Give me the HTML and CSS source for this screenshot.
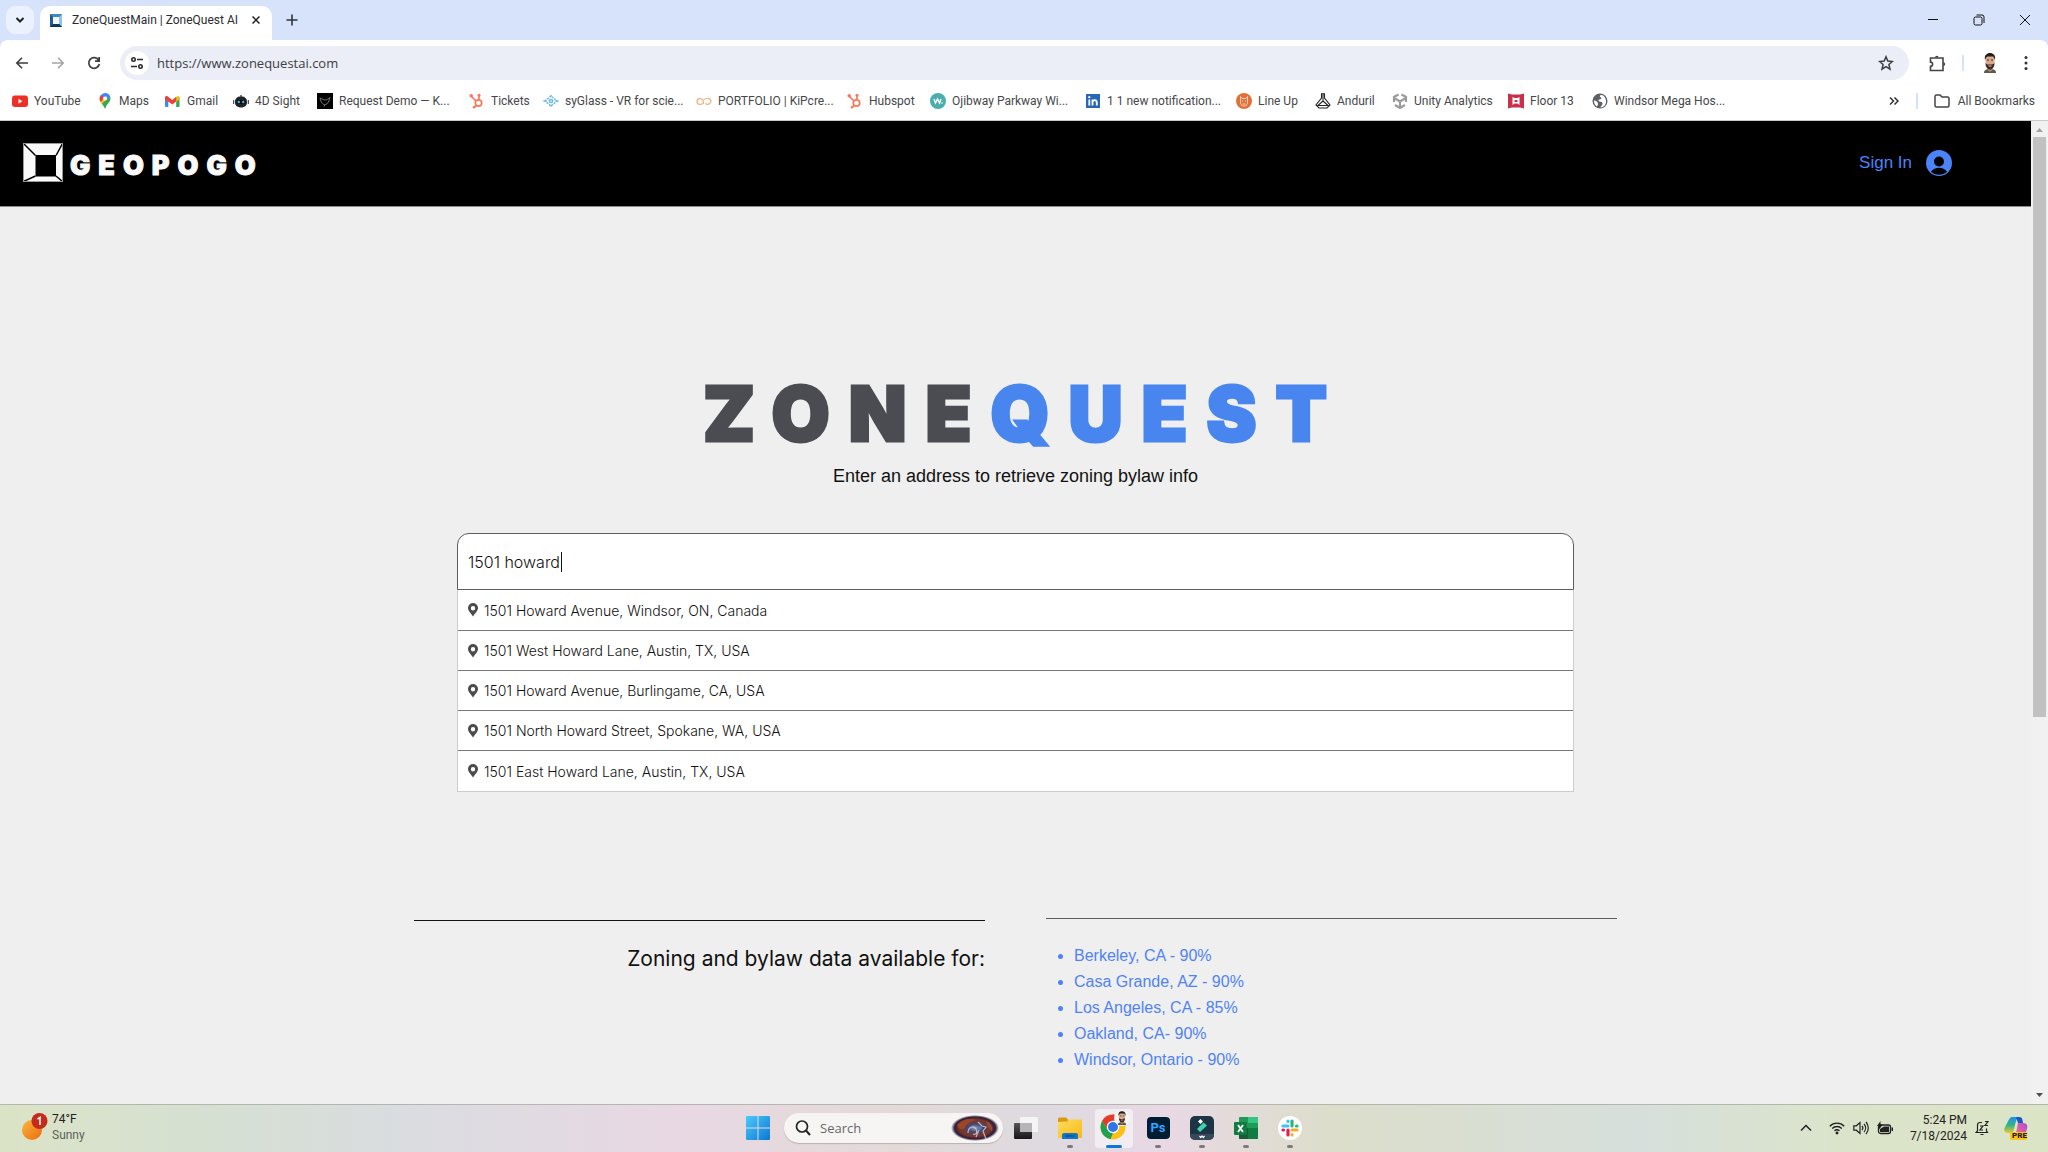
FILE: index.html
```html
<!DOCTYPE html>
<html lang="en">
<head>
<meta charset="utf-8">
<title>ZoneQuestMain | ZoneQuest AI</title>
<link rel="stylesheet" href="styles.css">
</head>
<body>
<svg width="0" height="0" class="defs" aria-hidden="true">
  <defs>
    <symbol id="pin" viewBox="0 0 10 14"><path fill="#4a4b4c" fill-rule="evenodd" d="M5 0a5 5 0 0 1 5 5c0 3-2.800 5-5 8.500C2.800 10 0 8 0 5a5 5 0 0 1 5-5zm0 3a2.200 2.200 0 1 0 0 4.400A2.200 2.200 0 0 0 5 3z"/></symbol>
    <symbol id="hubspot" viewBox="0 0 16 16"><g fill="none" stroke="#f8795a" stroke-width="1.700"><circle cx="9.500" cy="10" r="3.200"/><path d="M10 6.500V2M7 8L2.500 3.500M7.200 12.300L5 14.500"/></g><g fill="#f8795a"><circle cx="10" cy="2.200" r="1.500"/><circle cx="2.200" cy="2.800" r="1.800"/><circle cx="5" cy="14.300" r="1.300"/></g></symbol>
    <symbol id="face" viewBox="0 0 16 20"><path fill="#5d5852" d="M2 20c0-3 2-4 6-4s6 1 6 4z"/><path fill="#b98266" d="M5.500 12h5v5l-2.500 2-2.500-2z"/><path fill="#d8a88c" d="M3.500 5c0-5 9-5 9 0v5c0 3-2 6-4.500 6S3.500 13 3.500 10z"/><path fill="#231d1b" d="M3 7c-1-5 2-7 5-7s6 2 5 7c-1-2-1-3-2-3.500H5.500C4 4 4 5 3 7z"/><path fill="#3a2b26" d="M3.500 10c1 1.500 2 1.700 4.500 1.500s3.500 0 4.500-1.500c0 4-2 6.500-4.500 6.500S3.500 14 3.500 10z"/><path stroke="#3b2a24" d="M5 7h2M9 7h2"/><path stroke="#e9c9b8" d="M6.500 13h3"/></symbol>
    <linearGradient id="blue" x1="0" y1="0" x2="1" y2="1"><stop offset="0" stop-color="#4cc9fb"/><stop offset="1" stop-color="#0a78d4"/></linearGradient>
    <linearGradient id="sun" x1="0" y1="0" x2="1" y2="1"><stop offset="0" stop-color="#f6b73c"/><stop offset="1" stop-color="#f06a10"/></linearGradient>
    <linearGradient id="dark" x1="0" y1="0" x2="0" y2="1"><stop offset="0" stop-color="#555"/><stop offset="1" stop-color="#161616"/></linearGradient>
    <linearGradient id="folder" x1="0" y1="0" x2="1" y2="1"><stop offset="0" stop-color="#ffdc5e"/><stop offset="1" stop-color="#f9b916"/></linearGradient>
    <radialGradient id="nebula"><stop offset="0" stop-color="#8fa3c8"/><stop offset="0.300" stop-color="#4b4568"/><stop offset="0.650" stop-color="#7c3523"/><stop offset="0.850" stop-color="#2c1c3c"/><stop offset="1" stop-color="#2c1c3c" stop-opacity="0"/></radialGradient>
    <linearGradient id="cop1" x1="0" y1="0" x2="0" y2="1"><stop offset="0" stop-color="#1e8fe8"/><stop offset="0.500" stop-color="#2fb48a"/><stop offset="1" stop-color="#f1c52c"/></linearGradient>
    <linearGradient id="cop2" x1="1" y1="0" x2="0" y2="1"><stop offset="0" stop-color="#a44ae0"/><stop offset="0.500" stop-color="#e35fa2"/><stop offset="1" stop-color="#f78b3c"/></linearGradient>
  </defs>
</svg>

<header class="browser">
  <div class="tabstrip">
    <button class="tabsearch" aria-label="Search tabs"><svg width="10" height="10" viewBox="0 0 10 10"><path d="M1.500 3l3.500 3.500L8.500 3" fill="none" stroke="#222" stroke-width="2"/></svg></button>
    <div class="tab">
      <svg width="12" height="13" viewBox="0 0 12 13"><rect width="12" height="13" fill="#1d5c8f"/><path d="M0 0h12l-3 3H3z" fill="#3f8cc4"/><path d="M12 0v13l-3-3V3z" fill="#8ec4ea"/><path d="M0 13h12l-3-3H3z" fill="#123754"/><rect x="3" y="3" width="6" height="7" fill="#f3f7fb"/></svg>
      <span class="tab-title">ZoneQuestMain | ZoneQuest AI</span>
      <button class="icon-btn small" aria-label="Close tab"><svg width="8" height="8" viewBox="0 0 8 8"><path d="M.500.500l7 7m0-7l-7 7" stroke="#222" stroke-width="1.500"/></svg></button>
    </div>
    <button class="icon-btn newtab" aria-label="New tab"><svg width="12" height="12" viewBox="0 0 12 12"><path d="M6 .500v11M.500 6h11" stroke="#333" stroke-width="1.600"/></svg></button>
    <div class="winbtns">
      <button aria-label="Minimize"><svg width="12" height="12" viewBox="0 0 12 12"><path d="M1 5.500h10" stroke="#111"/></svg></button>
      <button aria-label="Restore"><svg width="12" height="12" viewBox="0 0 12 12" fill="none" stroke="#111"><rect x="1" y="3" width="8" height="8" rx="1.500"/><path d="M3.500 1H9a2 2 0 0 1 2 2v6"/></svg></button>
      <button aria-label="Close"><svg width="12" height="12" viewBox="0 0 12 12"><path d="M1 1l10 10M11 1L1 11" stroke="#111"/></svg></button>
    </div>
  </div>

  <div class="toolbar">
    <div class="nav">
      <button class="icon-btn" aria-label="Back"><svg width="14" height="12" viewBox="0 0 14 12" fill="none" stroke="#3c3d40" stroke-width="1.600"><path d="M13 6H2M7 .800L1.800 6 7 11.200"/></svg></button>
      <button class="icon-btn" aria-label="Forward"><svg width="14" height="12" viewBox="0 0 14 12" fill="none" stroke="#a4a5a8" stroke-width="1.600"><path d="M1 6h11M7 .800L12.200 6 7 11.200"/></svg></button>
      <button class="icon-btn" aria-label="Reload"><svg width="14" height="14" viewBox="0 0 14 14" fill="none" stroke="#3c3d40" stroke-width="1.700"><path d="M11.600 4.200A5.300 5.300 0 1 0 12.300 8M12.200 1v4.200H8"/></svg></button>
    </div>
    <div class="omnibox">
      <button class="site" aria-label="Site information"><svg width="14" height="12" viewBox="0 0 14 12" fill="none" stroke="#2b2c2e" stroke-width="1.600"><circle cx="3.500" cy="2.500" r="1.700"/><path d="M7 2.500h6M1 9.500h6"/><circle cx="10.500" cy="9.500" r="1.700"/></svg></button>
      <input class="url" type="text" aria-label="Address bar" value="https://www.zonequestai.com">
      <button class="icon-btn" aria-label="Bookmark this page"><svg width="16" height="16" viewBox="0 0 16 16"><path d="M8 1.800l1.800 4.300 4.600.4-3.500 3 1.100 4.600L8 11.600l-4 2.500 1.100-4.600-3.500-3 4.600-.4z" fill="none" stroke="#3c3d40" stroke-width="1.500"/></svg></button>
    </div>
    <div class="tools">
      <button class="icon-btn" aria-label="Extensions"><svg width="18" height="18" viewBox="0 0 18 18"><path d="M2.500 4H15v12.500H2.500v-4.200a2 2 0 0 0 0-4.200z" fill="none" stroke="#444" stroke-width="1.600"/><path d="M7 3.500a1.800 1.800 0 0 1 3.600 0zM15.300 8.200a1.900 1.900 0 0 1 0 3.800z" fill="#444"/></svg></button>
      <span class="divider"></span>
      <button class="icon-btn" aria-label="Profile"><svg width="16" height="20"><use href="#face"/></svg></button>
      <button class="icon-btn" aria-label="Menu"><svg width="4" height="16" viewBox="0 0 4 16" fill="#333"><circle cx="2" cy="2.500" r="1.500"/><circle cx="2" cy="8" r="1.500"/><circle cx="2" cy="13.500" r="1.500"/></svg></button>
    </div>
  </div>

  <div class="bookmarks">
    <nav class="marks">
      <a href="#"><svg width="16" height="16" viewBox="0 0 16 16"><rect y="2.500" width="16" height="11.500" rx="3" fill="#ee2f25"/><path d="M6.500 5.800v5l4-2.500z" fill="#fff"/></svg>YouTube</a>
      <a href="#"><svg width="16" height="16" viewBox="0 0 16 16"><path d="M8 0a5.500 5.500 0 0 1 5.300 4L8 10 3.600 2.400A5.500 5.500 0 0 1 8 0z" fill="#4285f4"/><path d="M3.600 2.200L8 5.500 3.700 9.300C2.200 7.200 2 4.300 3.600 2.200z" fill="#ea4335"/><path d="M3.500 9L9.500 3l1 3.500L5 11z" fill="#fbbc04"/><path d="M13.300 4C14.500 9 9.500 10 8.300 16c-.6 0-.8-2.500-3.600-5.300z" fill="#34a853"/><circle cx="8" cy="5.500" r="2" fill="#fff"/></svg>Maps</a>
      <a href="#"><svg width="16" height="16" viewBox="0 0 16 16"><path d="M0 4h3.300v10H1a1 1 0 0 1-1-1z" fill="#4285f4"/><path d="M11.200 4h3.300v9a1 1 0 0 1-1 1h-2.300z" fill="#34a853"/><path d="M11.200 4.500l1-1c1.300-1 2.300 0 2.300 1v1.700l-3.300 2.500z" fill="#fbbc04"/><path d="M0 4.500C0 3 1.500 2.500 2.500 3.300L7.300 6.900l3.900-3.200v4.800L7.300 11.500 0 6.200z" fill="#ea4335"/></svg>Gmail</a>
      <a href="#"><svg width="16" height="16" viewBox="0 0 16 16"><path d="M8 2v2M0.500 7v4M15.500 7v4" stroke="#555" stroke-width="1.500"/><rect x="2" y="3.500" width="12" height="11" rx="5" fill="#20252a"/><rect x="3.500" y="7" width="9" height="4" rx="2" fill="#0b0d10"/><circle cx="5.800" cy="9" r="1.200" fill="#49b4e8"/><circle cx="10.200" cy="9" r="1.200" fill="#49b4e8"/></svg>4D Sight</a>
      <a href="#"><svg width="16" height="16" viewBox="0 0 16 16"><rect width="16" height="16" fill="#000"/><path d="M3 5c1 5 3 7 5.500 6.500C11 11 12 8 13 4.500c-1.500 1-3 2.500-4.500 2.500S5 6 3 5zM8 11.500l-1 2" fill="none" stroke="#777"/></svg>Request Demo — K...</a>
      <a href="#"><svg width="16" height="16"><use href="#hubspot"/></svg>Tickets</a>
      <a href="#"><svg width="16" height="16" viewBox="0 0 16 16" fill="none" stroke="#69b7e2"><path d="M0 8h4M12 8h4M8 2v2M8 12v2"/><circle cx="8" cy="8" r="1.600" stroke-width="1.500"/><path d="M2 8l6-5 6 5-6 5z" stroke-width="1.500" stroke-dasharray="2 1"/></svg>syGlass - VR for scie...</a>
      <a href="#"><svg width="16" height="16" viewBox="0 0 16 16"><path d="M6.500 10.500C5 12 1 12 1 8.500 1 5 5 5 7 7c1 1.500-.5 3 1 4M8 7c1.500-2.500 7-2.500 7 1s-4 4-5.500 2.500" fill="none" stroke="#f2ad7c" stroke-width="1.200"/></svg>PORTFOLIO | KiPcre...</a>
      <a href="#"><svg width="16" height="16"><use href="#hubspot"/></svg>Hubspot</a>
      <a href="#"><svg width="16" height="16" viewBox="0 0 16 16"><circle cx="8" cy="8" r="8" fill="#4badae"/><path d="M4 6l1.500 4L7.500 6l2 4L11 6" fill="none" stroke="#fff" stroke-width="1.400"/><circle cx="12" cy="10" r=".8" fill="#fff"/></svg>Ojibway Parkway Wi...</a>
      <a href="#"><svg width="16" height="16" viewBox="0 0 16 16"><rect x="1" y="1" width="14" height="14" fill="#2867b8"/><path d="M4.300 6.500V12.500M7.500 12.500v-6M7.500 9.500c0-3.300 4.300-3.300 4.300 0v3" fill="none" stroke="#fff" stroke-width="1.800"/><circle cx="4.300" cy="4.200" r="1.100" fill="#fff"/></svg>1 1 new notification...</a>
      <a href="#"><svg width="16" height="16" viewBox="0 0 16 16"><circle cx="8" cy="8" r="8" fill="#e2703a"/><path d="M4.500 3.500l1.500 2h4l1.500-2v7l-2 2.500h-3l-2-2.500zM6 8h1m2 0h1M6.500 11h3" fill="none" stroke="#f8d9c6" stroke-width=".9"/></svg>Line Up</a>
      <a href="#"><svg width="16" height="16" viewBox="0 0 16 16" fill="none" stroke="#222" stroke-width="1.100"><path d="M6 .700h4M6.500 1v4L1 12l3 3h8l3-3L9.500 5V1M8 1v7l-5 4.500h10L8 8"/></svg>Anduril</a>
      <a href="#"><svg width="16" height="16" viewBox="0 0 16 16" fill="none" stroke="#9b9b9b" stroke-width="2.200"><path d="M6.500 1.500L2 4v5M9.500 1.500L14 4v5M3 12l5 3 5-3M8 8.500V14M8 8.500L3 5.500M8 8.500l5-3"/></svg>Unity Analytics</a>
      <a href="#"><svg width="16" height="16" viewBox="0 0 16 16"><path d="M0 .500l4 1h8l4-1v15l-4-1H4l-4 1z" fill="#c9304a"/><path d="M4.500 4l2 1h3l2-1v8l-2-1.500h-3l-2 1.500z" fill="#fff"/><path d="M6.500 7h3v2h-3z" fill="#c9304a"/></svg>Floor 13</a>
      <a href="#"><svg width="16" height="16" viewBox="0 0 16 16"><circle cx="8" cy="8" r="7.500" fill="#5d6167"/><path d="M9 2c-2 1-1 2 0 2.500s0 2-1.500 2S6 8 7.500 8.500s3 0 3 2-1.500 2-2 4c4-.5 6-3.500 5.500-7S11.500 2 9 2zM2 7.500c2 0 4 1.500 4 3.500s-1 1-1 2.500C3 12.500 1.800 10 2 7.500z" fill="#fff"/></svg>Windsor Mega Hos...</a>
    </nav>
    <div class="marks-end">
      <button class="icon-btn small" aria-label="More bookmarks"><svg width="10" height="8" viewBox="0 0 10 8" fill="none" stroke="#333" stroke-width="1.500"><path d="M1 .500L4.500 4 1 7.500M5.500.500L9 4 5.500 7.500"/></svg></button>
      <span class="divider"></span>
      <a class="all" href="#"><svg width="16" height="14" viewBox="0 0 16 14"><path d="M1 2.500A1.500 1.500 0 0 1 2.500 1H6l2 2h5.500A1.500 1.500 0 0 1 15 4.500V11.500A1.500 1.500 0 0 1 13.500 13h-11A1.500 1.500 0 0 1 1 11.500z" fill="none" stroke="#444" stroke-width="1.500"/></svg>All Bookmarks</a>
    </div>
  </div>
</header>

<div class="viewport">
  <div class="page">
    <header class="site-header">
      <a class="brand" href="#">
        <svg width="40" height="39" viewBox="0 0 40 39"><rect width="40" height="39" fill="#fafafa"/><rect x="12.500" y="12" width="20.500" height="21.500" fill="#000"/><path d="M.500.500L12.500 12.500M39.500.500L33 12.500M.500 38.500l12-5.500M39.500 38.500L33 33" stroke="#000" stroke-width="1.500"/><rect x=".5" y=".5" width="39" height="38" fill="none" stroke="#999"/></svg>
        <span>GEOPOGO</span>
      </a>
      <button class="signin">Sign In
        <svg width="26" height="26" viewBox="0 0 26 26"><circle cx="13" cy="13" r="13" fill="#4b84f8"/><circle cx="13" cy="11.500" r="5" fill="#000"/><path d="M5 21.800c3.500-5.500 12.500-5.500 16 0-4 4-12 4-16 0z" fill="#000"/></svg>
      </button>
    </header>

    <main>
      <h1 class="wordmark"><span>ZONE</span><span class="accent">QUEST</span></h1>
      <p class="tagline"><label for="address">Enter an address to retrieve zoning bylaw info</label></p>

      <div class="search">
        <div class="field">
          <input id="address" type="text" value="1501 howard" autocomplete="off">
          <span class="caret"></span>
        </div>
        <ul class="results">
          <li><button><svg width="10" height="14"><use href="#pin"/></svg>1501 Howard Avenue, Windsor, ON, Canada</button></li>
          <li><button><svg width="10" height="14"><use href="#pin"/></svg>1501 West Howard Lane, Austin, TX, USA</button></li>
          <li><button><svg width="10" height="14"><use href="#pin"/></svg>1501 Howard Avenue, Burlingame, CA, USA</button></li>
          <li><button><svg width="10" height="14"><use href="#pin"/></svg>1501 North Howard Street, Spokane, WA, USA</button></li>
          <li><button><svg width="10" height="14"><use href="#pin"/></svg>1501 East Howard Lane, Austin, TX, USA</button></li>
        </ul>
      </div>

      <section class="coverage">
        <h2>Zoning and bylaw data available for:</h2>
        <ul>
          <li>Berkeley, CA - 90%</li>
          <li>Casa Grande, AZ - 90%</li>
          <li>Los Angeles, CA - 85%</li>
          <li>Oakland, CA- 90%</li>
          <li>Windsor, Ontario - 90%</li>
        </ul>
      </section>
    </main>
  </div>
  <div class="scrollbar" aria-hidden="true">
    <svg width="17" height="16" viewBox="0 0 17 16"><path d="M5 11l3.500-4 3.500 4z" fill="#a3a3a3"/></svg>
    <div class="track"><div class="thumb"></div></div>
    <svg width="17" height="17" viewBox="0 0 17 17"><path d="M5 6l3.500 4L12 6z" fill="#505050"/></svg>
  </div>
</div>

<footer class="taskbar">
  <button class="weather">
    <svg width="26" height="28" viewBox="0 0 26 28"><circle cx="10" cy="17" r="10" fill="url(#sun)"/><circle cx="17.500" cy="8" r="8" fill="#c42b1c"/><path d="M15.500 6.200l2.500-1.700v7.500" fill="none" stroke="#fff" stroke-width="1.500"/></svg>
    <span class="lines"><span>74°F</span><span class="muted">Sunny</span></span>
  </button>

  <div class="apps">
    <button class="app" aria-label="Start"><svg width="24" height="24" viewBox="0 0 24 24"><path fill="url(#blue)" d="M1 0h10.500v11.500H0V1a1 1 0 0 1 1-1zM12.500 0H23a1 1 0 0 1 1 1v10.500H12.500zM0 12.500h11.500V24H1a1 1 0 0 1-1-1zM12.500 12.500H24V23a1 1 0 0 1-1 1H12.500z"/></svg></button>
    <div class="tasksearch">
      <svg width="16" height="16" viewBox="0 0 16 16"><circle cx="7" cy="6.500" r="5.500" fill="none" stroke="#222" stroke-width="1.700"/><path d="M11 10.500l4 4.500" stroke="#222" stroke-width="2"/></svg>
      <input type="text" aria-label="Search Windows" placeholder="Search">
      <svg width="50" height="26" viewBox="0 0 48 26"><ellipse cx="24" cy="13" rx="24" ry="13" fill="url(#nebula)"/><path d="M6 10c5-6 13-7 19-5-6 1-10 4-12 9-2 1-6 0-7-4z" fill="#a84a24" opacity=".8"/><path d="M35 6c5 2 7 6 6 10-3-2-5-5-6-10z" fill="#9a4a38"/><path d="M27 7l4 4 4 1-3 4 3 8M17 18c0-6 6-8 8-4s0 6-3 5M28 15l-3 7" fill="none" stroke="#cfd6ea" stroke-width="1.200" opacity=".8"/><circle cx="29" cy="13" r="2" fill="#4c7dc0"/></svg>
    </div>
    <button class="app" aria-label="Task view"><svg width="26" height="24" viewBox="0 0 26 24"><rect x="1" y="7" width="18" height="16" rx="1" fill="url(#dark)"/><rect x="7" y="1" width="18" height="15" rx="1" fill="#f6f6f6" opacity=".9"/><path d="M7 7h12v9H7z" fill="#b5b5b5"/></svg></button>
    <button class="app open" aria-label="File Explorer"><svg width="26" height="24" viewBox="0 0 26 24"><path d="M1 3a1.500 1.500 0 0 1 1.500-1.500H9L11.500 4v3H1z" fill="#d99a10"/><path d="M1 6l9-.5L12 3.500h12a1 1 0 0 1 1 1V22H1z" fill="url(#folder)"/><path d="M5 23v-4a2 2 0 0 1 2-2h12a2 2 0 0 1 2 2v4z" fill="#1376c8"/><path d="M8.500 20h9" stroke="#0a4d8c" stroke-width="1.500"/></svg></button>
    <button class="app active" aria-label="Google Chrome"><svg width="32" height="32" viewBox="0 0 32 32"><circle cx="15" cy="17" r="12.500" fill="#fbc116"/><path d="M15 4.500A12.500 12.500 0 0 1 25.800 10.800H15L9.600 20 4.200 10.800A12.500 12.500 0 0 1 15 4.500z" fill="#e33b2e"/><path d="M4.200 10.800L9.600 20l5.400 3-2.500 6.300A12.500 12.500 0 0 1 4.200 10.800z" fill="#1fa150"/><circle cx="15" cy="17" r="6.200" fill="#fff"/><circle cx="15" cy="17" r="5" fill="#2f74ea"/><circle cx="24" cy="8" r="8" fill="#f5f5f5"/><svg x="18.500" y="1" width="11" height="14"><use href="#face"/></svg></svg></button>
    <button class="app open" aria-label="Photoshop"><span class="ps">Ps</span></button>
    <button class="app open" aria-label="Filmora"><svg width="24" height="24" viewBox="0 0 24 24"><rect width="24" height="24" rx="5" fill="#1c3443"/><path d="M0 18h24v1a5 5 0 0 1-5 5H5a5 5 0 0 1-5-5z" fill="#36495a"/><path d="M8 5.500L10.500 3 13 5.500 10.500 8z" fill="#fff"/><path d="M13.500 6.500l3.500 3-7 6.500L7 13z" fill="#3ad6b0"/><path d="M9.500 20l1.300 1.500L12 20l1.200 1.500 1.300-1.500" fill="none" stroke="#fff" stroke-width="1.200"/></svg></button>
    <button class="app open" aria-label="Excel"><svg width="26" height="24" viewBox="0 0 26 24"><rect x="6" y="1" width="19" height="22" rx="1" fill="#1f9a57"/><path d="M15 1h9a1 1 0 0 1 1 1v5H15z" fill="#35c481"/><path d="M6 12h9v11H7a1 1 0 0 1-1-1z" fill="#185c37"/><path d="M15 12h10v10a1 1 0 0 1-1 1h-9z" fill="#107c41"/><rect x="1" y="6" width="13" height="13" rx="1.200" fill="#107c41"/><path d="M5 9l5 7M10 9l-5 7" stroke="#fff" stroke-width="1.800"/></svg></button>
    <button class="app open" aria-label="Slack"><svg width="24" height="24" viewBox="0 0 24 24" stroke-width="3.200" stroke-linecap="round"><circle cx="12" cy="12" r="12" fill="#fff"/><path d="M10 5.500V5M5 10h5" stroke="#36c5f0"/><path d="M14 5v5M18.500 10h.5" stroke="#2eb67d"/><path d="M14 14h5M14 18.500v.5" stroke="#ecb22e"/><path d="M10 14v5M5 14h.5" stroke="#e01e5a"/></svg></button>
  </div>

  <div class="tray">
    <button class="icon-btn" aria-label="Hidden icons"><svg width="12" height="8" viewBox="0 0 12 8"><path d="M1 6.500l5-5 5 5" fill="none" stroke="#222" stroke-width="1.500"/></svg></button>
    <button class="quick" aria-label="Network, volume and battery">
      <svg width="16" height="14" viewBox="0 0 16 14" fill="none" stroke="#222" stroke-width="1.300"><path d="M.800 5.200a10.200 10.200 0 0 1 14.400 0M3.200 7.500a6.800 6.800 0 0 1 9.600 0M5.500 9.800a3.500 3.500 0 0 1 5 0"/><circle cx="8" cy="12" r=".8" fill="#222"/></svg>
      <svg width="16" height="14" viewBox="0 0 16 14" fill="none" stroke="#222" stroke-width="1.200"><path d="M.800 4.800h2.500L7 1.500v11L3.300 9.200H.800zM9 5a3 3 0 0 1 0 4M11 3a6 6 0 0 1 0 8M13 1a9 9 0 0 1 0 12"/></svg>
      <svg width="16" height="14" viewBox="0 0 16 14"><rect x="1.500" y="4" width="12" height="8.500" rx="2" fill="none" stroke="#222" stroke-width="1.300"/><path d="M3 11V8l4-2.500h5V11zM14.500 6.500h1.500v3.500h-1.500zM3.500 0L0 5h2v3.500L6 3.500H3.500z" fill="#222"/></svg>
    </button>
    <button class="clock lines"><span>5:24 PM</span><span>7/18/2024</span></button>
    <button class="icon-btn bell" aria-label="Notifications"><svg width="14" height="16" viewBox="0 0 14 16" fill="none" stroke="#222" stroke-width="1.200"><path d="M7 2.500H5Q2.500 2.500 2.500 5v6L1 12.500h11.500L11.500 11V8.500M5.500 14.500h3M5 6h3l-3 4h3M10 1.500h3l-3 4h3"/></svg></button>
    <button class="icon-btn copilot" aria-label="Copilot"><svg width="24" height="24" viewBox="0 0 24 24"><path d="M5 3.500C6 1.500 7 1 9 1h6c-2.500 1-3 4-4 8l-2 8H5c-4 0-6-2-4-6z" fill="url(#cop1)"/><path d="M12 1h3.500c2 0 2.800 1.500 3 3l.5 3h-5z" fill="#1b56c8"/><path d="M14 7h5c4 0 5 3 4 6l-2 6c-1 2-2 3-4 3H9c2-1 2.500-3 3-5z" fill="url(#cop2)"/><rect x="6" y="16" width="17" height="8" rx="1.500" fill="#fcc419"/></svg><span class="pre">PRE</span></button>
  </div>
</footer>
</body>
</html>
```
FILE: styles.css
```css
* { box-sizing: border-box; }
body {
  margin: 0;
  min-height: 100vh;
  display: flex;
  flex-direction: column;
  font-family: Roboto, "Open Sans", sans-serif;
  font-size: 12px;
  color: #3c3d40;
}
.defs { position: absolute; }
svg { display: block; flex: none; }
ul, h1, h2, p { margin: 0; padding: 0; }
button {
  border: 0;
  padding: 0;
  background: none;
  font: inherit;
  color: inherit;
}
input { font: inherit; border: 0; outline: 0; background: none; min-width: 0; }
a { color: inherit; text-decoration: none; }

.icon-btn {
  width: 36px;
  height: 28px;
  display: grid;
  place-items: center;
  flex: none;
}
.icon-btn.small { width: 20px; height: 20px; }
.divider { width: 2px; height: 16px; background: #d3e3fd; }

/* Browser window */
.browser { background: #d6e3fb; border-bottom: 1px solid #c9cacc; }
.tabstrip {
  height: 40px;
  display: flex;
  align-items: center;
}
.tabsearch {
  width: 28px;
  height: 28px;
  margin: 0 6px;
  border-radius: 9px;
  background: #ebf2fd;
  display: grid;
  place-items: center;
}
.tab {
  width: 232px;
  height: 34px;
  align-self: flex-end;
  display: flex;
  align-items: center;
  padding: 0 6px 6px 10px;
  border-radius: 10px 10px 0 0;
  background: #fff;
}
.tab-title { flex: 1; padding-left: 10px; white-space: nowrap; color: #2b2c2e; }
.newtab { width: 40px; }
.winbtns { margin-left: auto; display: flex; }
.winbtns button {
  width: 46px;
  height: 40px;
  display: grid;
  place-items: center;
}

.toolbar {
  height: 46px;
  display: flex;
  align-items: center;
  border-radius: 8px 8px 0 0;
  background: #fff;
}
.nav { display: flex; width: 120px; padding-left: 4px; }
.omnibox {
  flex: 1;
  height: 34px;
  display: flex;
  align-items: center;
  padding: 0 5px;
  border-radius: 17px;
  background: #ebeef7;
}
.site {
  width: 24px;
  height: 24px;
  border-radius: 12px;
  background: #fff;
  display: grid;
  place-items: center;
}
.url {
  flex: 1;
  padding: 0 0 0 8px;
  font-family: "Open Sans", sans-serif;
  font-size: 13px;
  color: #3c3d40;
}
.tools { display: flex; align-items: center; width: 139px; padding-left: 10px; gap: 7px; }
.tools .icon-btn:nth-child(3) { margin-left: 1px; }
.tools .icon-btn:last-child { margin-left: -7px; }

.bookmarks {
  height: 34px;
  display: flex;
  justify-content: space-between;
  align-items: center;
  padding: 0 13px 4px 12px;
  background: #fff;
}
.marks {
  display: grid;
  grid-template-columns: 85px 68px 68px 84px 152px 74px 153px 151px 83px 155px 151px 79px 77px 116px 84px 140px;
}
.marks a, .all { display: flex; align-items: center; gap: 6px; white-space: nowrap; color: #45474a; }
.marks-end { display: flex; align-items: center; gap: 12px; }
.all { gap: 8px; margin-left: 4px; }

/* Page area */
.viewport { flex: 1; display: flex; }
.page { flex: 1; min-width: 0; background: #efefef; }
.site-header {
  height: 86px;
  display: flex;
  align-items: center;
  justify-content: space-between;
  padding: 0 79px 2px 23px;
  background: #000;
  border-bottom: 1px solid #8c8c8c;
}
.brand {
  display: flex;
  align-items: center;
  gap: 7px;
  font-family: Inter, sans-serif;
  font-size: 27px;
  font-weight: 900;
  letter-spacing: 8px;
  -webkit-text-stroke: 1px;
  color: #fafafa;
}
.brand span { padding-top: 6px; line-height: 34px; }
.signin {
  display: flex;
  align-items: center;
  gap: 14px;
  font-family: "Liberation Sans", sans-serif;
  font-size: 17px;
  color: #4b84f8;
}

main { padding-top: 175px; }
.wordmark {
  font-family: Inter, sans-serif;
  font-size: 75px;
  line-height: 64px;
  font-weight: 900;
  letter-spacing: 19px;
  -webkit-text-stroke: 3px;
  padding-left: 18px;
  text-align: center;
  color: #4b4c52;
}
.accent { color: #4885ef; }
.tagline {
  margin-top: 18px;
  font-family: "Liberation Sans", sans-serif;
  font-size: 18px;
  line-height: 24px;
  text-align: center;
  color: #111;
}

.search {
  width: 55%;
  margin: 45px auto 0;
  font-family: Inter, sans-serif;
  font-weight: 300;
  color: #111;
}
.field { position: relative; }
.field input {
  display: block;
  width: 100%;
  height: 57px;
  padding: 0 10px;
  border: 1px solid #5c5d5f;
  border-radius: 12px 12px 0 0;
  background: #fff;
  font-size: 16px;
  color: #111;
}
.caret {
  position: absolute;
  left: 104px;
  top: 19px;
  width: 1px;
  height: 20px;
  background: #111;
}
.results {
  list-style: none;
  background: #fff;
  border: 1px solid #ccc;
  border-top: 0;
}
.results li + li { border-top: 1px solid #77787a; }
.results button {
  width: 100%;
  height: 39px;
  display: flex;
  align-items: center;
  gap: 6px;
  padding-left: 10px;
  font-size: 14px;
  text-align: left;
}
.results li:first-child button, .results li:last-child button { height: 40px; }

.coverage {
  width: 59.2%;
  margin: 126px auto 0;
  display: grid;
  grid-template-columns: 1fr 1fr;
  gap: 61px;
}
.coverage h2 {
  margin-top: 2px;
  padding-top: 24px;
  border-top: 1px solid #111;
  font-family: Inter, sans-serif;
  font-size: 21px;
  line-height: 28px;
  font-weight: 400;
  text-align: right;
  color: #111;
}
.coverage ul {
  padding: 24px 0 0 28px;
  border-top: 1px solid #5c5d5f;
  font-family: "Liberation Sans", sans-serif;
  font-size: 16px;
  line-height: 26px;
  color: #4f83f5;
}

.scrollbar {
  width: 17px;
  display: flex;
  flex-direction: column;
  background: #f1f1f1;
}
.track { flex: 1; padding: 0 2px; }
.thumb { height: 61%; background: #c1c1c1; }

/* Windows taskbar */
.taskbar {
  height: 48px;
  display: grid;
  grid-template-columns: 1fr auto 1fr;
  border-top: 1px solid #b4b5ae;
  background: linear-gradient(90deg, #dbe3c6 0%, #d5e0d2 10%, #dadce0 20%, #e8d8e3 33%, #e3dad8 44%, #dedae0 51%, #e8d8e3 57%, #dcdecb 65%, #d6dfdb 80%, #dbe4ca 90%, #dce4c6 100%);
  color: #222;
}
.weather { display: flex; align-items: center; gap: 4px; padding: 0 0 4px 22px; justify-self: start; }
.lines { display: flex; flex-direction: column; line-height: 16px; text-align: left; }
.muted { color: #5d615a; }
.apps { display: flex; align-items: center; }
.app {
  width: 44px;
  height: 47px;
  padding-bottom: 2px;
  display: grid;
  place-items: center;
  position: relative;
}
.open::after, .active::after {
  content: "";
  position: absolute;
  left: 19px;
  bottom: 4px;
  width: 6px;
  height: 3px;
  border-radius: 2px;
  background: #7d7a7d;
}
.active::after { left: 14px; width: 16px; background: #0a78d4; }
.active::before {
  content: "";
  position: absolute;
  inset: 4px 3px;
  border-radius: 4px;
  background: #f2edf2;
}
.active svg { position: relative; margin-bottom: 4px; }
.ps {
  width: 23px;
  height: 22px;
  border-radius: 4px;
  background: #001d34;
  color: #31a8ff;
  font-size: 13px;
  line-height: 22px;
  font-weight: 700;
}
.tasksearch {
  width: 219px;
  height: 30px;
  margin: 0 1px 2px 4px;
  padding: 0 3px 0 11px;
  display: flex;
  align-items: center;
  border-radius: 15px;
  background: #f7f5f4;
  box-shadow: 0 1px 1px #b9b2b2;
}
.tasksearch input { flex: 1; padding: 0 0 0 9px; font-family: "Open Sans", sans-serif; font-size: 13px; }
.tasksearch input::placeholder { color: #666; }
.tray { display: flex; align-items: center; justify-content: flex-end; padding: 0 16px 2px 0; }
.quick { display: flex; gap: 8px; padding: 0 16px 0 7px; }
.clock { width: 58px; text-align: right; }
.tray .icon-btn { width: 32px; }
.tray .bell { width: 36px; margin-left: -3px; }
.copilot { position: relative; }
.pre { position: absolute; right: 5px; bottom: 1px; font-size: 8px; line-height: 10px; font-weight: 900; }
```
